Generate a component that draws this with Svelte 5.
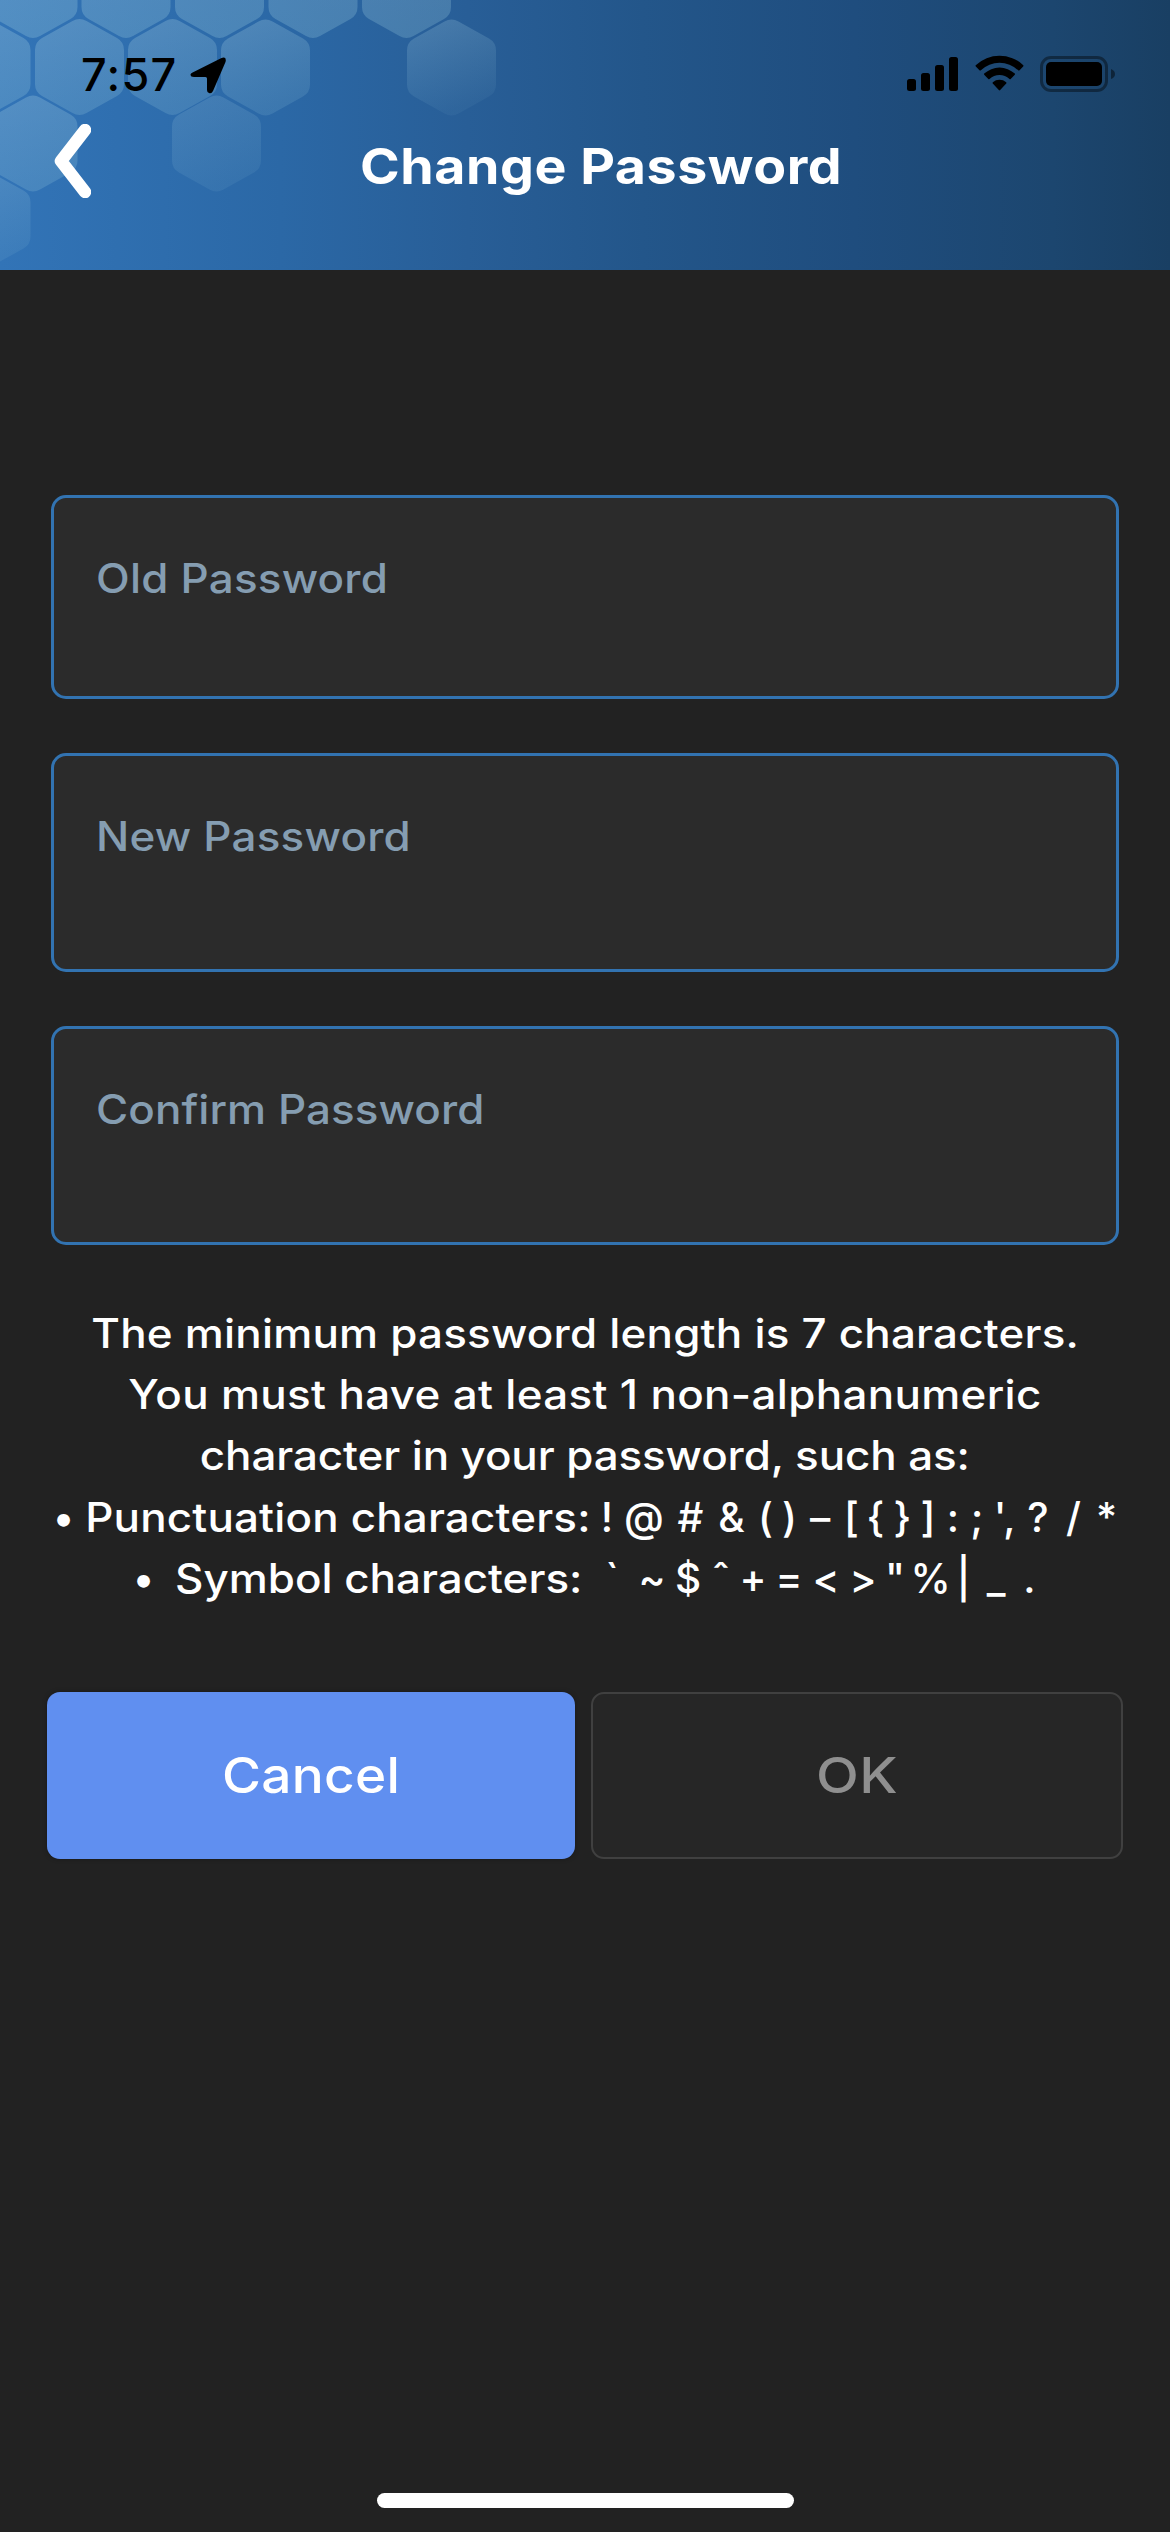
<script>
  // Header hexagons: centre x, centre y, opacity at the top, opacity at the bottom
  const hexes = [
    [-60, -10, 0.3, 0.28], [33, -10, 0.3, 0.28], [126, -10, 0.29, 0.27], [219.5, -10, 0.28, 0.27], [313, -10, 0.27, 0.26], [406.5, -10, 0.26, 0.25],
    [-14, 67, 0.3, 0.24], [79.5, 67, 0.29, 0.22], [172.5, 67, 0.28, 0.19], [265.5, 67.5, 0.28, 0.15], [451.5, 67.5, 0.25, 0.06],
    [33, 143.5, 0.28, 0.21], [216.5, 143.5, 0.18, 0.09],
    [-14, 219.5, 0.23, 0.1]
  ].map(([x, y, a, b]) => ({ x, y, a, b }));

  const fields = [
    { id: 'old', label: 'Old Password' },
    { id: 'new', label: 'New Password' },
    { id: 'confirm', label: 'Confirm Password' }
  ];

  // Each entry is a piece of text and the centre it is spaced to
  const spaced = (items) =>
    items.map(([text, at], i) => ({ text, gap: at - (i ? items[i - 1][1] : 47) }));

  const rows = [
    { id: 'punct', items: spaced([
      ['•', 63.5], ['Punctuation characters:', 338], ['!', 607], ['@', 644], ['#', 690.5], ['&', 731.5],
      ['(', 765.5], [')', 789.5], ['–', 820], ['[', 851.5], ['{', 875.5], ['}', 902.5], [']', 928],
      [':', 953], [';', 977], ["'", 1000], [',', 1009.5], ['?', 1038], ['/', 1073.5], ['*', 1106.5]
    ]) },
    { id: 'symbol', items: spaced([
      ['•', 143.5], ['Symbol characters:', 378.5], ['`', 612], ['~', 652], ['$', 688], ['ˆ', 721], ['+', 753],
      ['=', 789], ['<', 826], ['>', 863], ['"', 895], ['%', 930.5], ['|', 963.5], ['_', 996], ['.', 1029.5]
    ]) }
  ];
</script>

<div class="screen">
  <header>
    <svg class="pattern" width="600" height="270" viewBox="0 0 600 270" aria-hidden="true">
      <defs>
        {#each hexes as h, i}
          <linearGradient id="hex{i}" x1="0" y1="0" x2="0.3" y2="1">
            <stop offset="0" stop-color="#b0d6e6" stop-opacity={h.a} />
            <stop offset="1" stop-color="#9fd0e0" stop-opacity={h.b} />
          </linearGradient>
        {/each}
      </defs>
      {#each hexes as h, i}
        <path
          transform="translate({h.x} {h.y})"
          fill="url(#hex{i})"
          d="M-7-46Q0-50 7-46L37.5-29Q44.5-25 44.5-17V17Q44.5 25 37.5 29L7 46Q0 50-7 46L-37.5 29Q-44.5 25-44.5 17V-17Q-44.5-25-37.5-29Z"
        />
      {/each}
    </svg>
    <div class="status">
      <span class="time">7:57</span>
      <svg class="arrow" width="37" height="37" viewBox="0 0 37 37" aria-hidden="true">
        <path d="M2.600 15.500 31 1.200Q37-1 35.500 5L23 34Q21.500 37 19 36Q17 35.500 17 33V21.500Q17 20 15.500 20H4Q.5 20 .5 17.500Q.5 16.300 2.600 15.500Z" />
      </svg>
      <svg class="signal" width="51" height="34" viewBox="0 0 51 34" aria-hidden="true">
        <rect x="0" y="22" width="9" height="12" rx="2.500" /><rect x="14" y="16" width="9" height="18" rx="2.500" />
        <rect x="28" y="8" width="9" height="26" rx="2.500" /><rect x="42" y="0" width="9" height="34" rx="2.500" />
      </svg>
      <svg class="wifi" width="49" height="36" viewBox="0 0 49 36" aria-hidden="true">
        <path d="M.7 10.200A34.500 34.500 0 0 1 48.300 10.200Q48.700 10.800 48.200 11.400L44.300 15.400Q43.700 15.800 43.100 15.300A27 27 0 0 0 5.900 15.300Q5.300 15.800 4.700 15.400L.8 11.400Q.3 10.800.7 10.200Z" />
        <path d="M9.200 18.600A22.500 22.500 0 0 1 39.800 18.600Q40.300 19.200 39.800 19.800L35.700 23.900Q35.100 24.400 34.500 23.900A15 15 0 0 0 14.500 23.900Q13.900 24.400 13.300 23.900L9.200 19.800Q8.700 19.200 9.200 18.600Z" />
        <path d="M17.800 27.200A10.500 10.500 0 0 1 31.200 27.200Q31.700 27.800 31.200 28.400L25.200 35.100Q24.500 35.800 23.800 35.100L17.800 28.400Q17.300 27.800 17.800 27.200Z" />
      </svg>
      <svg class="battery" width="75" height="36" viewBox="0 0 75 36" aria-hidden="true">
        <rect x="1.500" y="1.500" width="65" height="33" rx="9.500" fill="none" stroke="#000" stroke-opacity=".4" stroke-width="3" />
        <rect x="6" y="6" width="56" height="24" rx="5" />
        <path d="M71 13Q75 14.500 75 18T71 23Z" fill-opacity=".45" />
      </svg>
    </div>
    <div class="nav">
      <svg class="back" width="37" height="74" viewBox="0 0 37 74" role="img" aria-label="Back">
        <path d="M31 6 7 37 31 68" fill="none" stroke="#fff" stroke-width="12.500" stroke-linecap="round" stroke-linejoin="round" />
      </svg>
      <h1><span class="wide">Change Password</span></h1>
    </div>
  </header>

  <main>
    {#each fields as f}
      <div class="field {f.id}"><span class="wide">{f.label}</span></div>
    {/each}

    <div class="rules">
      <p><span class="wide first">The minimum password length is 7 characters.</span></p>
      <p><span class="wide second">You must have at least 1 non-alphanumeric</span></p>
      <p><span class="wide third">character in your password, such as:</span></p>
      {#each rows as row}
        <p class="row {row.id}">
          {#each row.items as item}
            <span class="cell" style="margin-left: {item.gap}px"><span class:wide={item.text.length > 1}>{item.text}</span></span>
          {/each}
        </p>
      {/each}
    </div>

    <div class="actions">
      <button class="cancel"><span class="wide">Cancel</span></button>
      <button class="ok"><span class="wide">OK</span></button>
    </div>
  </main>
  <div class="home"></div>
</div>

<style>
  :global(body) { margin: 0; background: #222; }
  .screen { width: 1170px; height: 2532px; display: flex; flex-direction: column; background: #222; color: #fff; font-family: Inter, 'Liberation Sans', sans-serif; font-weight: 500; overflow: hidden; }
  .wide { display: inline-block; transform: scaleX(1.085); }

  header { position: relative; height: 270px; flex: none; background: linear-gradient(90deg, #3274b7 0%, #2b68a6 24%, #285e97 40%, #23568a 55%, #1f4d7e 73%, #1c466f 90%, #193f63 100%); }
  .pattern { position: absolute; left: 0; top: 0; }
  .status { position: relative; height: 110px; display: flex; align-items: flex-start; color: #000; }
  .status svg { flex: none; display: block; }
  .time { width: 109px; margin: 47px 0 0 81px; font-size: 45px; line-height: 55px; letter-spacing: 1.300px; }
  .arrow { margin-top: 57px; }
  .signal { margin: 57px 0 0 auto; }
  .wifi { margin: 55px 0 0 17px; }
  .battery { margin: 56px 55px 0 16px; }
  .nav { position: relative; display: grid; grid-template-columns: 91px 1fr 59px; }
  .back { margin: 13.500px 0 0 54px; }
  h1 { margin: 25px 0 0; font-size: 49.500px; line-height: 62px; font-weight: 700; text-align: center; letter-spacing: .480px; }

  main { flex: 1; padding: 225px 47px 0; }
  .field { box-sizing: border-box; height: 219px; margin: 0 4px 54px; padding: 51px 0 0 42px; border: 3px solid #3273b1; border-radius: 15px; background: #2b2b2b; color: #859db1; font-size: 40.500px; line-height: 60px; letter-spacing: .200px; white-space: nowrap; }
  .field .wide { transform-origin: left; }
  .field.old { height: 204px; }
  .field.confirm { letter-spacing: .070px; }

  .rules { padding-top: 4px; font-size: 40.500px; text-align: center; white-space: nowrap; }
  p { margin: 0; line-height: 61.200px; }
  .first { letter-spacing: .190px; }
  .second { letter-spacing: .300px; }
  .third { letter-spacing: -.100px; }
  .row { display: flex; }
  .cell { display: flex; width: 0; justify-content: center; }
  .punct .wide { letter-spacing: .150px; }

  .actions { display: flex; gap: 15.500px; margin-top: 83px; }
  button { flex: 1; height: 167px; padding: 1px 0 0; border-radius: 13px; border: 0; font: 500 49px/60px Inter, 'Liberation Sans', sans-serif; color: #fff; background: #608ff0; letter-spacing: .250px; }
  .cancel { box-shadow: 0 0 5px rgba(0, 0, 0, .3); }
  .ok { border: 2px solid #404040; background: #262626; color: #8f8f8f; letter-spacing: .500px; }
  .ok .wide { transform: scaleX(1.14); }
  .home { width: 417px; height: 15px; border-radius: 8px; background: #fff; margin: 0 0 24px 377px; }
</style>
